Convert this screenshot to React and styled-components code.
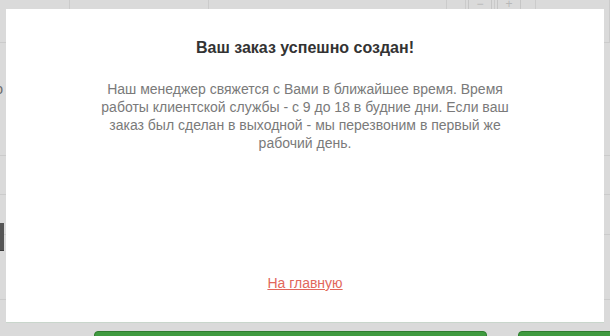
import styled, { createGlobalStyle } from "styled-components";

const GlobalStyle = createGlobalStyle`
    html, body {
        margin: 0;
        padding: 0;
        width: 100%;
        height: 100%;
        overflow: hidden;
        font-family: "Liberation Sans", Arial, sans-serif;
    }
    #root {
        height: 100%;
    }
`

const App = () => {
    return (
        <>
            <GlobalStyle />
            <Page>
                <Backdrop>
                    <TopRow>
                        <Cell w={70} />
                        <Cell w={139} />
                        <Cell w={238} />
                        <Cell w={19} />
                        <Cell w={29}>
                            <StepButton>−</StepButton>
                        </Cell>
                        <Cell w={41}>
                            <StepButton>+</StepButton>
                        </Cell>
                        <Cell w={74} />
                    </TopRow>
                    <Row h={113}>
                        <CutText>Сто</CutText>
                    </Row>
                    <Row h={39} />
                    <Row h={40}>
                        <DarkButton />
                    </Row>
                    <Row h={65} />
                    <Footer>
                        <GreenButton w={393} />
                        <GreenButton w={120} />
                    </Footer>
                </Backdrop>

                <Modal>
                    <Title>Ваш заказ успешно создан!</Title>
                    <Message>
                        Наш менеджер свяжется с Вами в ближайшее время. Время
                        работы клиентской службы - с 9 до 18 в будние дни. Если ваш
                        заказ был сделан в выходной - мы перезвоним в первый же
                        рабочий день.
                    </Message>
                    <HomeLink href="#">На главную</HomeLink>
                </Modal>
            </Page>
        </>
    );
}

const Page = styled.div`
    position: relative;
    width: 610px;
    height: 336px;
    background-color: #dadada;
    overflow: hidden;
`
const Backdrop = styled.div`
    display: flex;
    flex-direction: column;
    width: 100%;
    height: 100%;
`
const TopRow = styled.div`
    display: flex;
    flex-direction: row;
    flex-shrink: 0;
    height: 43px;
    border-bottom: solid 1px #cbcbcb;
    box-sizing: border-box;
`
const Cell = styled.div`
    width: ${props => props.w}px;
    flex-shrink: 0;
    border-right: solid 1px #cbcbcb;
    box-sizing: border-box;
    display: flex;
    justify-content: flex-start;
    padding-left: 2px;
`
const StepButton = styled.div`
    width: 22px;
    height: 12px;
    border: solid 1px #c6c6c6;
    border-top: none;
    color: #b8b8b8;
    font-size: 12px;
    line-height: 9px;
    text-align: center;
`
const Row = styled.div`
    height: ${props => props.h}px;
    flex-shrink: 0;
    border-bottom: solid 1px #cbcbcb;
    box-sizing: border-box;
    display: flex;
    align-items: flex-start;
`
const CutText = styled.span`
    margin-left: -21px;
    margin-top: 37px;
    font-size: 14px;
    line-height: 18px;
    color: #6a6a6a;
`
const DarkButton = styled.div`
    width: 64px;
    height: 27px;
    margin-left: -60px;
    margin-top: 28px;
    background-color: #555;
    border-bottom: solid 1px #3a3a3a;
`
const Footer = styled.div`
    display: flex;
    flex-direction: row;
    flex-shrink: 0;
    gap: 31px;
    padding: 31px 0 0 94px;
`
const GreenButton = styled.div`
    width: ${props => props.w}px;
    flex-shrink: 0;
    height: 30px;
    background-color: #3f9a3f;
    border: solid 1px #2f7d2f;
    border-radius: 4px;
    box-sizing: border-box;
`
const Modal = styled.div`
    position: absolute;
    top: 9px;
    left: 6px;
    width: 598px;
    height: 313px;
    background-color: #fff;
    box-shadow: 0 1px 0 #c9d6cc;
    display: flex;
    flex-direction: column;
    align-items: center;
    padding: 29px 0 30px;
    box-sizing: border-box;
`
const Title = styled.h2`
    margin: 0;
    font-size: 16px;
    line-height: 20px;
    font-weight: bold;
    color: #333;
`
const Message = styled.p`
    margin: 22px 0 0;
    width: 420px;
    font-size: 14px;
    line-height: 18px;
    color: #7a7a7a;
    text-align: center;
`
const HomeLink = styled.a`
    margin-top: auto;
    font-size: 14px;
    line-height: 18px;
    color: #e2675c;
    text-decoration: underline;
`

export default App;
